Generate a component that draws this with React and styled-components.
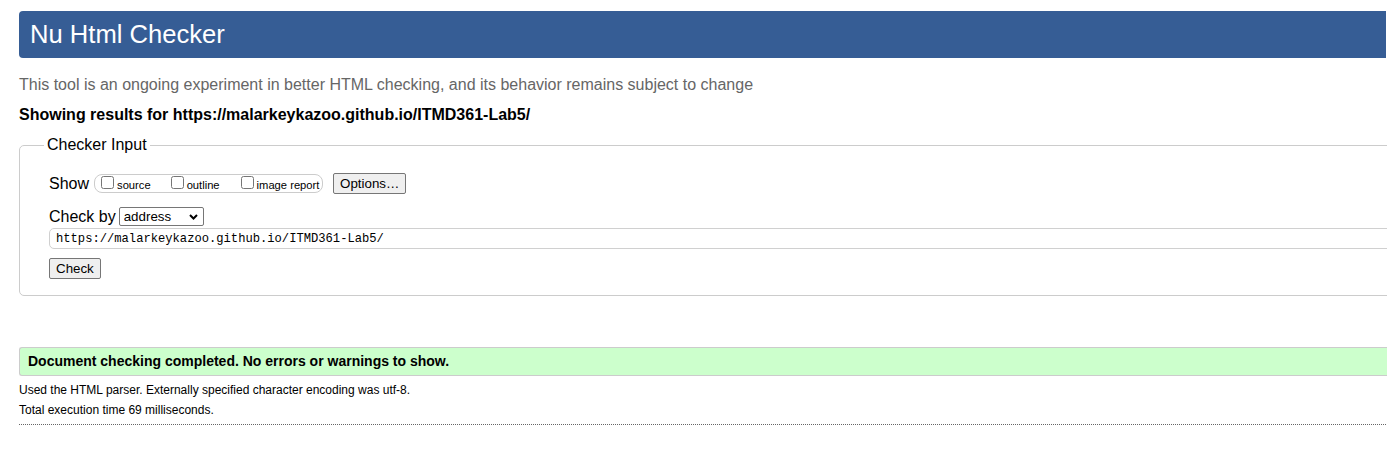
import React from "react";
import styled, { createGlobalStyle } from "styled-components";

const GlobalStyle = createGlobalStyle`
  html, body {
    margin: 0;
    padding: 0;
    background: #ffffff;
    overflow: hidden;
  }
  body {
    font-family: "Liberation Sans", Arial, sans-serif;
    color: #000000;
  }
`;

const Page = styled.div`
  width: 1420px;
  padding: 11px 0 0 19px;
  box-sizing: border-box;
  display: flex;
  flex-direction: column;
`;

const Header = styled.h1`
  margin: 0;
  width: 1367px;
  height: 47px;
  box-sizing: border-box;
  padding-left: 11px;
  background: #365d95;
  border-radius: 4px 0 0 4px;
  color: #ffffff;
  font-size: 25.6px;
  font-weight: normal;
  line-height: 46px;
`;

const Intro = styled.p`
  margin: 18px 0 0;
  font-size: 16px;
  line-height: 18px;
  color: #666666;
`;

const Showing = styled.p`
  margin: 12px 0 0;
  font-size: 16px;
  line-height: 18px;
  font-weight: bold;
`;

const Fieldset = styled.fieldset`
  margin: 12px 0 0;
  padding: 19px 0 16px 29px;
  border: 1px solid #cccccc;
  border-radius: 5px;
  min-width: 0;
`;

const Legend = styled.legend`
  margin-left: -5px;
  padding: 0 3px;
  font-size: 16px;
  line-height: 18px;
`;

const Row = styled.div`
  display: flex;
  align-items: center;
  height: ${(p) => p.$h}px;
  margin-top: ${(p) => p.$mt || 0}px;
`;

const Label = styled.span`
  font-size: 16px;
  line-height: 18px;
  margin-right: 3px;
`;

const Group = styled.div`
  display: flex;
  align-items: center;
  height: 19px;
  width: 229px;
  box-sizing: border-box;
  border: 1px solid #cccccc;
  border-radius: 8px;
  padding-left: 2px;
  margin-left: 2px;
`;

const Option = styled.label`
  display: flex;
  align-items: center;
  font-size: 11.2px;
  margin-right: ${(p) => p.$mr || 0}px;

  input {
    width: 13px;
    height: 13px;
    margin: 0 3px 2px 4px;
  }
  span {
    position: relative;
    top: 1px;
  }
`;

const Button = styled.button`
  font-family: "Liberation Sans", Arial, sans-serif;
  font-size: 13.33px;
  height: ${(p) => p.$h || 21}px;
  padding: 0 6px;
  border: 1px solid #767676;
  border-radius: 2px;
  background: #efefef;
  color: #000000;
  margin-left: ${(p) => p.$ml || 0}px;
`;

const SelectWrap = styled.div`
  position: relative;
  height: 19px;
`;

const Select = styled.select`
  appearance: none;
  width: 85px;
  height: 19px;
  box-sizing: border-box;
  border: 1px solid #767676;
  border-radius: 2px;
  background: #ffffff;
  font-family: "Liberation Sans", Arial, sans-serif;
  font-size: 13.33px;
  padding: 0 0 0 4px;
  color: #000000;
`;

const Chevron = styled.svg`
  position: absolute;
  right: 6px;
  top: 7px;
  pointer-events: none;
`;

const UrlInput = styled.input`
  width: 1400px;
  height: 21px;
  box-sizing: border-box;
  margin-top: 2px;
  border: 1px solid #d0d0d0;
  border-radius: 5px;
  padding: 0 0 0 6px;
  font-family: "Liberation Mono", "DejaVu Sans Mono", monospace;
  font-size: 12.15px;
  color: #000000;
  outline: none;
  display: block;
`;

const Success = styled.div`
  margin-top: 51px;
  height: 29px;
  box-sizing: border-box;
  border: 1px solid #cccccc;
  border-right: none;
  border-radius: 3px 0 0 3px;
  background: #ccffcc;
  padding-left: 8px;
  font-size: 14px;
  font-weight: bold;
  line-height: 27px;
`;

const Detail = styled.p`
  margin: ${(p) => p.$mt || 0}px 0 0;
  font-size: 12px;
  line-height: 20px;
`;

const Rule = styled.div`
  margin-top: 4px;
  border-top: 1px dotted #666666;
`;

export default function App() {
  return (
    <>
      <GlobalStyle />
      <Page>
        <Header>Nu Html Checker</Header>
        <Intro>
          This tool is an ongoing experiment in better HTML checking, and its
          behavior remains subject to change
        </Intro>
        <Showing>
          Showing results for https://malarkeykazoo.github.io/ITMD361-Lab5/
        </Showing>
        <Fieldset>
          <Legend>Checker Input</Legend>
          <Row $h={21}>
            <Label>Show</Label>
            <Group>
              <Option $mr={16}>
                <input type="checkbox" />
                <span>source</span>
              </Option>
              <Option $mr={17}>
                <input type="checkbox" />
                <span>outline</span>
              </Option>
              <Option>
                <input type="checkbox" />
                <span>image report</span>
              </Option>
            </Group>
            <Button $ml={10}>Options…</Button>
          </Row>
          <Row $h={19} $mt={13}>
            <Label>Check by</Label>
            <SelectWrap>
              <Select defaultValue="address">
                <option value="address">address</option>
                <option value="file">file upload</option>
                <option value="text">text input</option>
              </Select>
              <Chevron width="9" height="6" viewBox="0 0 9 6">
                <polyline
                  points="1,1 4.5,4.5 8,1"
                  fill="none"
                  stroke="#000"
                  strokeWidth="2"
                />
              </Chevron>
            </SelectWrap>
          </Row>
          <UrlInput
            type="url"
            defaultValue="https://malarkeykazoo.github.io/ITMD361-Lab5/"
          />
          <Row $h={21} $mt={9}>
            <Button>Check</Button>
          </Row>
        </Fieldset>
        <Success>
          Document checking completed. No errors or warnings to show.
        </Success>
        <Detail $mt={4}>
          Used the HTML parser. Externally specified character encoding was
          utf-8.
        </Detail>
        <Detail>Total execution time 69 milliseconds.</Detail>
        <Rule />
      </Page>
    </>
  );
}
